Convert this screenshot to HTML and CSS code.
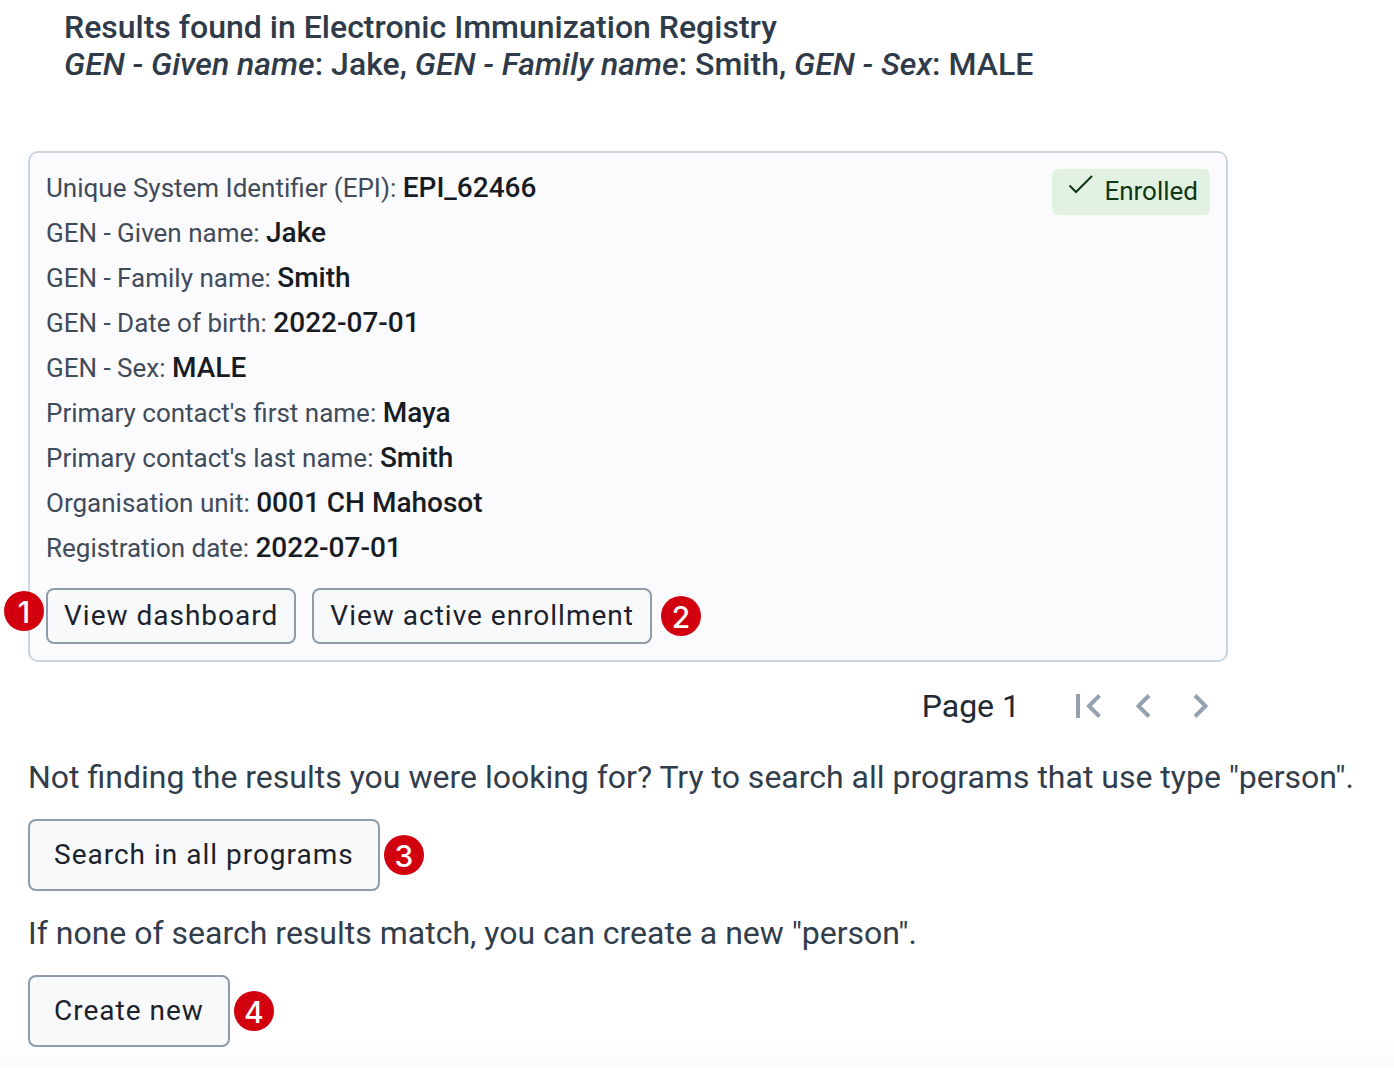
FILE: index.html
```html
<!DOCTYPE html>
<html lang="en">
<head>
<meta charset="utf-8">
<title>Search results</title>
<link rel="stylesheet" href="styles.css">
</head>
<body>
<main class="page">
  <header class="results-header">
    <h1 class="results-title">Results found in Electronic Immunization Registry</h1>
    <p class="results-title"><i>GEN - Given name</i>: Jake, <i>GEN - Family name</i>: Smith, <i>GEN - Sex</i>: MALE</p>
  </header>

  <section class="results">
    <article class="card">
      <div class="card-top">
        <dl class="fields">
          <div class="field"><dt>Unique System Identifier (EPI):</dt> <dd>EPI_62466</dd></div>
          <div class="field"><dt>GEN - Given name:</dt> <dd>Jake</dd></div>
          <div class="field"><dt>GEN - Family name:</dt> <dd>Smith</dd></div>
          <div class="field"><dt>GEN - Date of birth:</dt> <dd>2022-07-01</dd></div>
          <div class="field"><dt>GEN - Sex:</dt> <dd>MALE</dd></div>
          <div class="field"><dt>Primary contact's first name:</dt> <dd>Maya</dd></div>
          <div class="field"><dt>Primary contact's last name:</dt> <dd>Smith</dd></div>
          <div class="field"><dt>Organisation unit:</dt> <dd>0001 CH Mahosot</dd></div>
          <div class="field"><dt>Registration date:</dt> <dd>2022-07-01</dd></div>
        </dl>
        <span class="tag">
          <svg class="tag-icon" viewBox="0 0 28 24" width="28" height="24" aria-hidden="true"><path d="M3.500 12.500 10 19 26 3" fill="none" stroke="currentColor" stroke-width="2"/></svg>
          Enrolled
        </span>
      </div>
      <div class="card-actions">
        <span class="marked">
          <button type="button" class="button button-small">View dashboard</button>
          <span class="marker marker-before">1</span>
        </span>
        <span class="marked">
          <button type="button" class="button button-small">View active enrollment</button>
          <span class="marker marker-after-wide">2</span>
        </span>
      </div>
    </article>

    <nav class="pagination" aria-label="Pagination">
      <span class="page-label">Page 1</span>
      <button type="button" class="page-button" aria-label="First page"><svg viewBox="0 0 48 48" width="48" height="48"><path d="M12 12h4v24h-4z" fill="currentColor"/><path d="M35.500 13.500 25 24l10.500 10.500" fill="none" stroke="currentColor" stroke-width="4"/></svg></button>
      <button type="button" class="page-button" aria-label="Previous page"><svg viewBox="0 0 48 48" width="48" height="48"><path d="M29 13.500 18.500 24 29 34.500" fill="none" stroke="currentColor" stroke-width="4"/></svg></button>
      <button type="button" class="page-button" aria-label="Next page"><svg viewBox="0 0 48 48" width="48" height="48"><path d="M19 13.500 29.500 24 19 34.500" fill="none" stroke="currentColor" stroke-width="4"/></svg></button>
    </nav>
  </section>

  <section class="fallback">
    <p class="hint">Not finding the results you were looking for? Try to search all programs that use type "person".</p>
    <span class="marked">
      <button type="button" class="button">Search in all programs</button>
      <span class="marker marker-after">3</span>
    </span>
  </section>

  <section class="fallback">
    <p class="hint">If none of search results match, you can create a new "person".</p>
    <span class="marked">
      <button type="button" class="button">Create new</button>
      <span class="marker marker-after">4</span>
    </span>
  </section>
</main>
</body>
</html>
```
FILE: styles.css
```css
* {
  box-sizing: border-box;
}

body {
  margin: 0;
  background: #fff;
  color: #212934;
  font-family: Roboto, "Liberation Sans", sans-serif;
}

.page {
  padding: 9px 28px 20px;
  background: linear-gradient(#fefefe, #fbfbfb) bottom / 100% 26px no-repeat;
}

.results-header {
  padding: 0 36px;
}

.results-title {
  margin: 0;
  color: #303b4a;
  font-size: 32px;
  font-weight: 500;
  line-height: 37px;
}

.results {
  max-width: 1200px;
  margin-top: 68px;
}

.card {
  padding: 16px;
  border: 2px solid #cbd5e0;
  border-radius: 10px;
  background: #fbfbfe;
}

.card-top {
  display: flex;
  align-items: flex-start;
  justify-content: space-between;
}

.fields {
  display: flex;
  flex-direction: column;
  gap: 8px;
  margin: 0;
  padding-top: 1px;
}

.field {
  color: #404b5a;
  font-size: 26px;
  line-height: 37px;
}

.field dt,
.field dd {
  display: inline;
  margin: 0;
}

.field dd {
  color: #171b22;
  font-size: 28px;
  font-weight: 500;
  line-height: 32px;
}

.tag {
  display: flex;
  gap: 10px;
  height: 46px;
  padding: 0 12px 0 14px;
  border-radius: 6px;
  background: #e2f2e2;
  color: #103713;
  font-size: 26px;
  line-height: 44px;
}

.tag-icon {
  margin-top: 4px;
}

.card-actions {
  display: flex;
  gap: 16px;
  margin-top: 21px;
}

.marked {
  position: relative;
  display: inline-flex;
  vertical-align: top;
}

.button {
  padding: 0 24px;
  height: 72px;
  border: 2px solid #8e9bab;
  border-radius: 8px;
  background: #f8f9fb;
  color: #1c222b;
  font-family: inherit;
  font-size: 28px;
  letter-spacing: 1px;
  line-height: 32px;
}

.button-small {
  height: 56px;
  padding: 0 16px;
}

.marker {
  position: absolute;
  top: 50%;
  width: 40px;
  height: 40px;
  margin-top: -20px;
  border-radius: 50%;
  background: #d2000f;
  color: #fff;
  font-family: Inter, sans-serif;
  font-size: 30px;
  font-weight: 500;
  line-height: 42px;
  text-align: center;
}

.marker-before {
  right: 100%;
  margin: -25px 2px 0 0;
}

.marker-after {
  left: 100%;
  margin-left: 4px;
}

.marker-after-wide {
  left: 100%;
  margin-left: 9px;
}

.pagination {
  display: flex;
  align-items: center;
  justify-content: flex-end;
  gap: 8px;
  padding: 20px 4px 29px;
}

.page-label {
  margin-right: 36px;
  font-size: 32px;
  line-height: 38px;
}

.page-button {
  display: flex;
  padding: 0;
  border: 0;
  background: none;
  color: #93a1b1;
}

.fallback + .fallback {
  margin-top: 24px;
}

.hint {
  margin: 0 0 24px;
  color: #323d4c;
  font-size: 32px;
  line-height: 36px;
}
```
